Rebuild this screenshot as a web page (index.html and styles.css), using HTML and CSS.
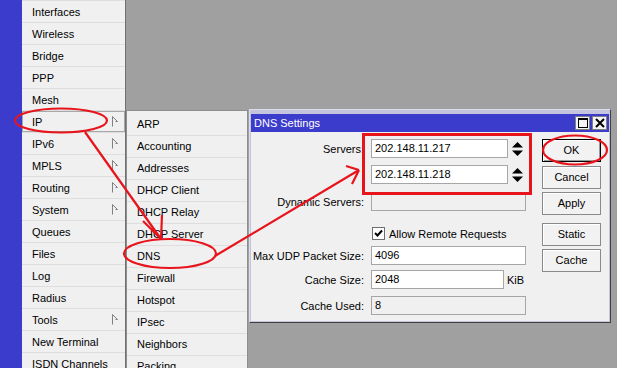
FILE: index.html
```html
<!DOCTYPE html>
<html>
<head>
<meta charset="utf-8">
<link rel="stylesheet" href="styles.css">
</head>
<body>
<div class="app">
  <div class="strip"></div>
  <nav class="menu">
    <div class="mi">Interfaces</div>
    <div class="mi">Wireless</div>
    <div class="mi">Bridge</div>
    <div class="mi">PPP</div>
    <div class="mi">Mesh</div>
    <div class="mi sel">IP<svg class="arr" width="7" height="11" viewBox="0 0 7 11"><path d="M1.5 0.5V10.5M1.5 0.5L6.5 5.5L4.5 5.5" fill="none" stroke="#808080" stroke-width="1"/></svg></div>
    <div class="mi">IPv6<svg class="arr" width="7" height="11" viewBox="0 0 7 11"><path d="M1.5 0.5V10.5M1.5 0.5L6.5 5.5L4.5 5.5" fill="none" stroke="#808080" stroke-width="1"/></svg></div>
    <div class="mi">MPLS<svg class="arr" width="7" height="11" viewBox="0 0 7 11"><path d="M1.5 0.5V10.5M1.5 0.5L6.5 5.5L4.5 5.5" fill="none" stroke="#808080" stroke-width="1"/></svg></div>
    <div class="mi">Routing<svg class="arr" width="7" height="11" viewBox="0 0 7 11"><path d="M1.5 0.5V10.5M1.5 0.5L6.5 5.5L4.5 5.5" fill="none" stroke="#808080" stroke-width="1"/></svg></div>
    <div class="mi">System<svg class="arr" width="7" height="11" viewBox="0 0 7 11"><path d="M1.5 0.5V10.5M1.5 0.5L6.5 5.5L4.5 5.5" fill="none" stroke="#808080" stroke-width="1"/></svg></div>
    <div class="mi">Queues</div>
    <div class="mi">Files</div>
    <div class="mi">Log</div>
    <div class="mi">Radius</div>
    <div class="mi">Tools<svg class="arr" width="7" height="11" viewBox="0 0 7 11"><path d="M1.5 0.5V10.5M1.5 0.5L6.5 5.5L4.5 5.5" fill="none" stroke="#808080" stroke-width="1"/></svg></div>
    <div class="mi">New Terminal</div>
    <div class="mi">ISDN Channels</div>
  </nav>
  <div class="desktop">
    <div class="submenu">
      <div class="si">ARP</div>
      <div class="si">Accounting</div>
      <div class="si">Addresses</div>
      <div class="si">DHCP Client</div>
      <div class="si">DHCP Relay</div>
      <div class="si">DHCP Server</div>
      <div class="si">DNS</div>
      <div class="si">Firewall</div>
      <div class="si">Hotspot</div>
      <div class="si">IPsec</div>
      <div class="si">Neighbors</div>
      <div class="si">Packing</div>
    </div>
    <div class="dialog">
      <div class="title">
        <span class="ttext">DNS Settings</span>
        <div class="tbtns">
          <div class="tb"><svg width="10" height="10" viewBox="0 0 10 10"><rect x="0.5" y="0.5" width="9" height="9" fill="none" stroke="#000"/><line x1="0" y1="1.5" x2="10" y2="1.5" stroke="#000"/></svg></div>
          <div class="tb"><svg width="10" height="10" viewBox="0 0 10 10"><path d="M1 1L9 9M9 1L1 9" stroke="#000" stroke-width="2"/></svg></div>
        </div>
      </div>
      <div class="body">
        <div class="form">
          <div class="row">
            <span class="lbl">Servers:</span>
            <div class="inp w137">202.148.11.217</div>
            <svg class="spin" width="11" height="14" viewBox="0 0 11 14"><path d="M5.5 0L11 5.5H0Z M5.5 14L11 8.5H0Z" fill="#000"/></svg>
          </div>
          <div class="row r2">
            <span class="lbl"></span>
            <div class="inp w137">202.148.11.218</div>
            <svg class="spin" width="11" height="14" viewBox="0 0 11 14"><path d="M5.5 0L11 5.5H0Z M5.5 14L11 8.5H0Z" fill="#000"/></svg>
          </div>
          <div class="row r3">
            <span class="lbl">Dynamic Servers:</span>
            <div class="inp w155 dis"></div>
          </div>
          <div class="row chk">
            <span class="box"><svg width="9" height="9" viewBox="0 0 9 9"><path d="M1 4L3.5 6.5L8 1.5" fill="none" stroke="#000" stroke-width="2"/></svg></span>
            <span>Allow Remote Requests</span>
          </div>
          <div class="row r5">
            <span class="lbl">Max UDP Packet Size:</span>
            <div class="inp w155">4096</div>
          </div>
          <div class="row r6">
            <span class="lbl">Cache Size:</span>
            <div class="inp w133">2048</div>
            <span class="unit">KiB</span>
          </div>
          <div class="row r7">
            <span class="lbl">Cache Used:</span>
            <div class="inp w155 dis">8</div>
          </div>
        </div>
        <div class="btns">
          <div class="btn def">OK</div>
          <div class="btn b2">Cancel</div>
          <div class="btn b3">Apply</div>
          <div class="btn b4">Static</div>
          <div class="btn b5">Cache</div>
        </div>
      </div>
    </div>
  </div>
</div>
<svg class="annot" width="617" height="368" viewBox="0 0 617 368">
  <g fill="none" stroke="#e8141c" stroke-width="2.2">
    <ellipse cx="61" cy="120.5" rx="46" ry="12"/>
    <ellipse cx="170" cy="253.5" rx="46" ry="14.5"/>
    <ellipse cx="575" cy="150" rx="32" ry="14.5"/>
    <path d="M85 132L161 239M161 239L143 221M161 239L162 215"/>
    <path d="M215 256L359 170M359 170L346 166M359 170L352 184"/>
    <rect x="363.5" y="134.5" width="167" height="59" stroke-width="3"/>
  </g>
</svg>
</body>
</html>
```
FILE: styles.css
```css
html, body {
  margin: 0;
  padding: 0;
}
body {
  width: 617px;
  height: 368px;
  overflow: hidden;
  position: relative;
  font-family: "Liberation Sans", Arial, sans-serif;
  font-size: 11px;
  color: #000;
}
.app {
  display: flex;
  height: 368px;
}
.strip {
  width: 22px;
  flex: none;
  background: #3c3ccc;
}
.menu {
  width: 103px;
  flex: none;
  background: #f0f0f0;
  border-right: 1px solid #707070;
}
.mi {
  height: 21px;
  border-top: 1px solid #dedede;
  display: flex;
  align-items: center;
  justify-content: space-between;
  padding: 0 7px 0 10px;
}
.mi.sel {
  box-shadow: inset 0 0 0 1px #a8a8a8;
}
.arr {
  flex: none;
}
.desktop {
  flex: 1;
  position: relative;
  background: #a0a0a0;
}
.submenu {
  position: absolute;
  left: 0;
  top: 110px;
  width: 120px;
  height: 270px;
  padding-top: 2px;
  background: #f0f0f0;
  border: 1px solid #8e8e8e;
}
.si {
  height: 21px;
  line-height: 21px;
  border-top: 1px solid #dedede;
  padding-left: 10px;
}
.si:first-child {
  border-top-color: transparent;
}
.dialog {
  position: absolute;
  left: 123px;
  top: 109px;
  width: 358px;
  padding: 4px 1px 1px 1px;
  background: #c4c4dc;
  border: 1px solid;
  border-color: #dcdcec #404040 #404040 #dcdcec;
}
.title {
  height: 18px;
  background: #3c3ccc;
  display: flex;
  align-items: center;
  justify-content: space-between;
  padding: 0 2px 0 3px;
}
.ttext {
  color: #fff;
}
.tbtns {
  display: flex;
  gap: 2px;
}
.tb {
  width: 13px;
  height: 12px;
  background: #f4f4f4;
  border: 1px solid #808080;
  display: flex;
  align-items: center;
  justify-content: center;
}
.body {
  height: 182px;
  background: #f0f0f0;
  padding-top: 7px;
  display: flex;
}
.form {
  width: 278px;
  display: flex;
  flex-direction: column;
}
.row {
  display: flex;
  align-items: center;
  height: 19px;
}
.r2 { margin-top: 7px; }
.r3 { margin-top: 8px; }
.chk { margin-top: 16px; height: 13px; padding-left: 121px; gap: 4px; }
.r5 { margin-top: 6px; }
.r6 { margin-top: 5px; }
.r7 { margin-top: 7px; }
.lbl {
  width: 113px;
  margin-right: 7px;
  text-align: right;
  flex: none;
}
.inp {
  box-sizing: border-box;
  height: 19px;
  line-height: 17px;
  border: 1px solid #a6a6a6;
  background: #fff;
  padding-left: 3px;
  flex: none;
}
.inp.dis {
  background: #f0f0f0;
}
.w137 { width: 137px; }
.w155 { width: 155px; }
.w133 { width: 133px; }
.spin {
  margin-left: 4px;
}
.unit {
  margin-left: 3px;
}
.box {
  box-sizing: border-box;
  width: 13px;
  height: 13px;
  border: 1px solid #6e6e6e;
  background: #fff;
  display: flex;
  align-items: center;
  justify-content: center;
}
.btns {
  margin-left: 13px;
  width: 59px;
  display: flex;
  flex-direction: column;
}
.btn {
  box-sizing: border-box;
  height: 23px;
  line-height: 21px;
  text-align: center;
  border: 1px solid #8a8a8a;
  background: #f2f2f2;
  box-shadow: inset 1px 1px #fff;
}
.btn.def {
  border-color: #000;
  box-shadow: inset 1px 1px #fff, inset -1px -1px #9a9a9a;
}
.b2 { margin-top: 4px; }
.b3 { margin-top: 3px; }
.b4 { margin-top: 8px; }
.b5 { margin-top: 3px; }
.annot {
  position: absolute;
  left: 0;
  top: 0;
  pointer-events: none;
}
```
